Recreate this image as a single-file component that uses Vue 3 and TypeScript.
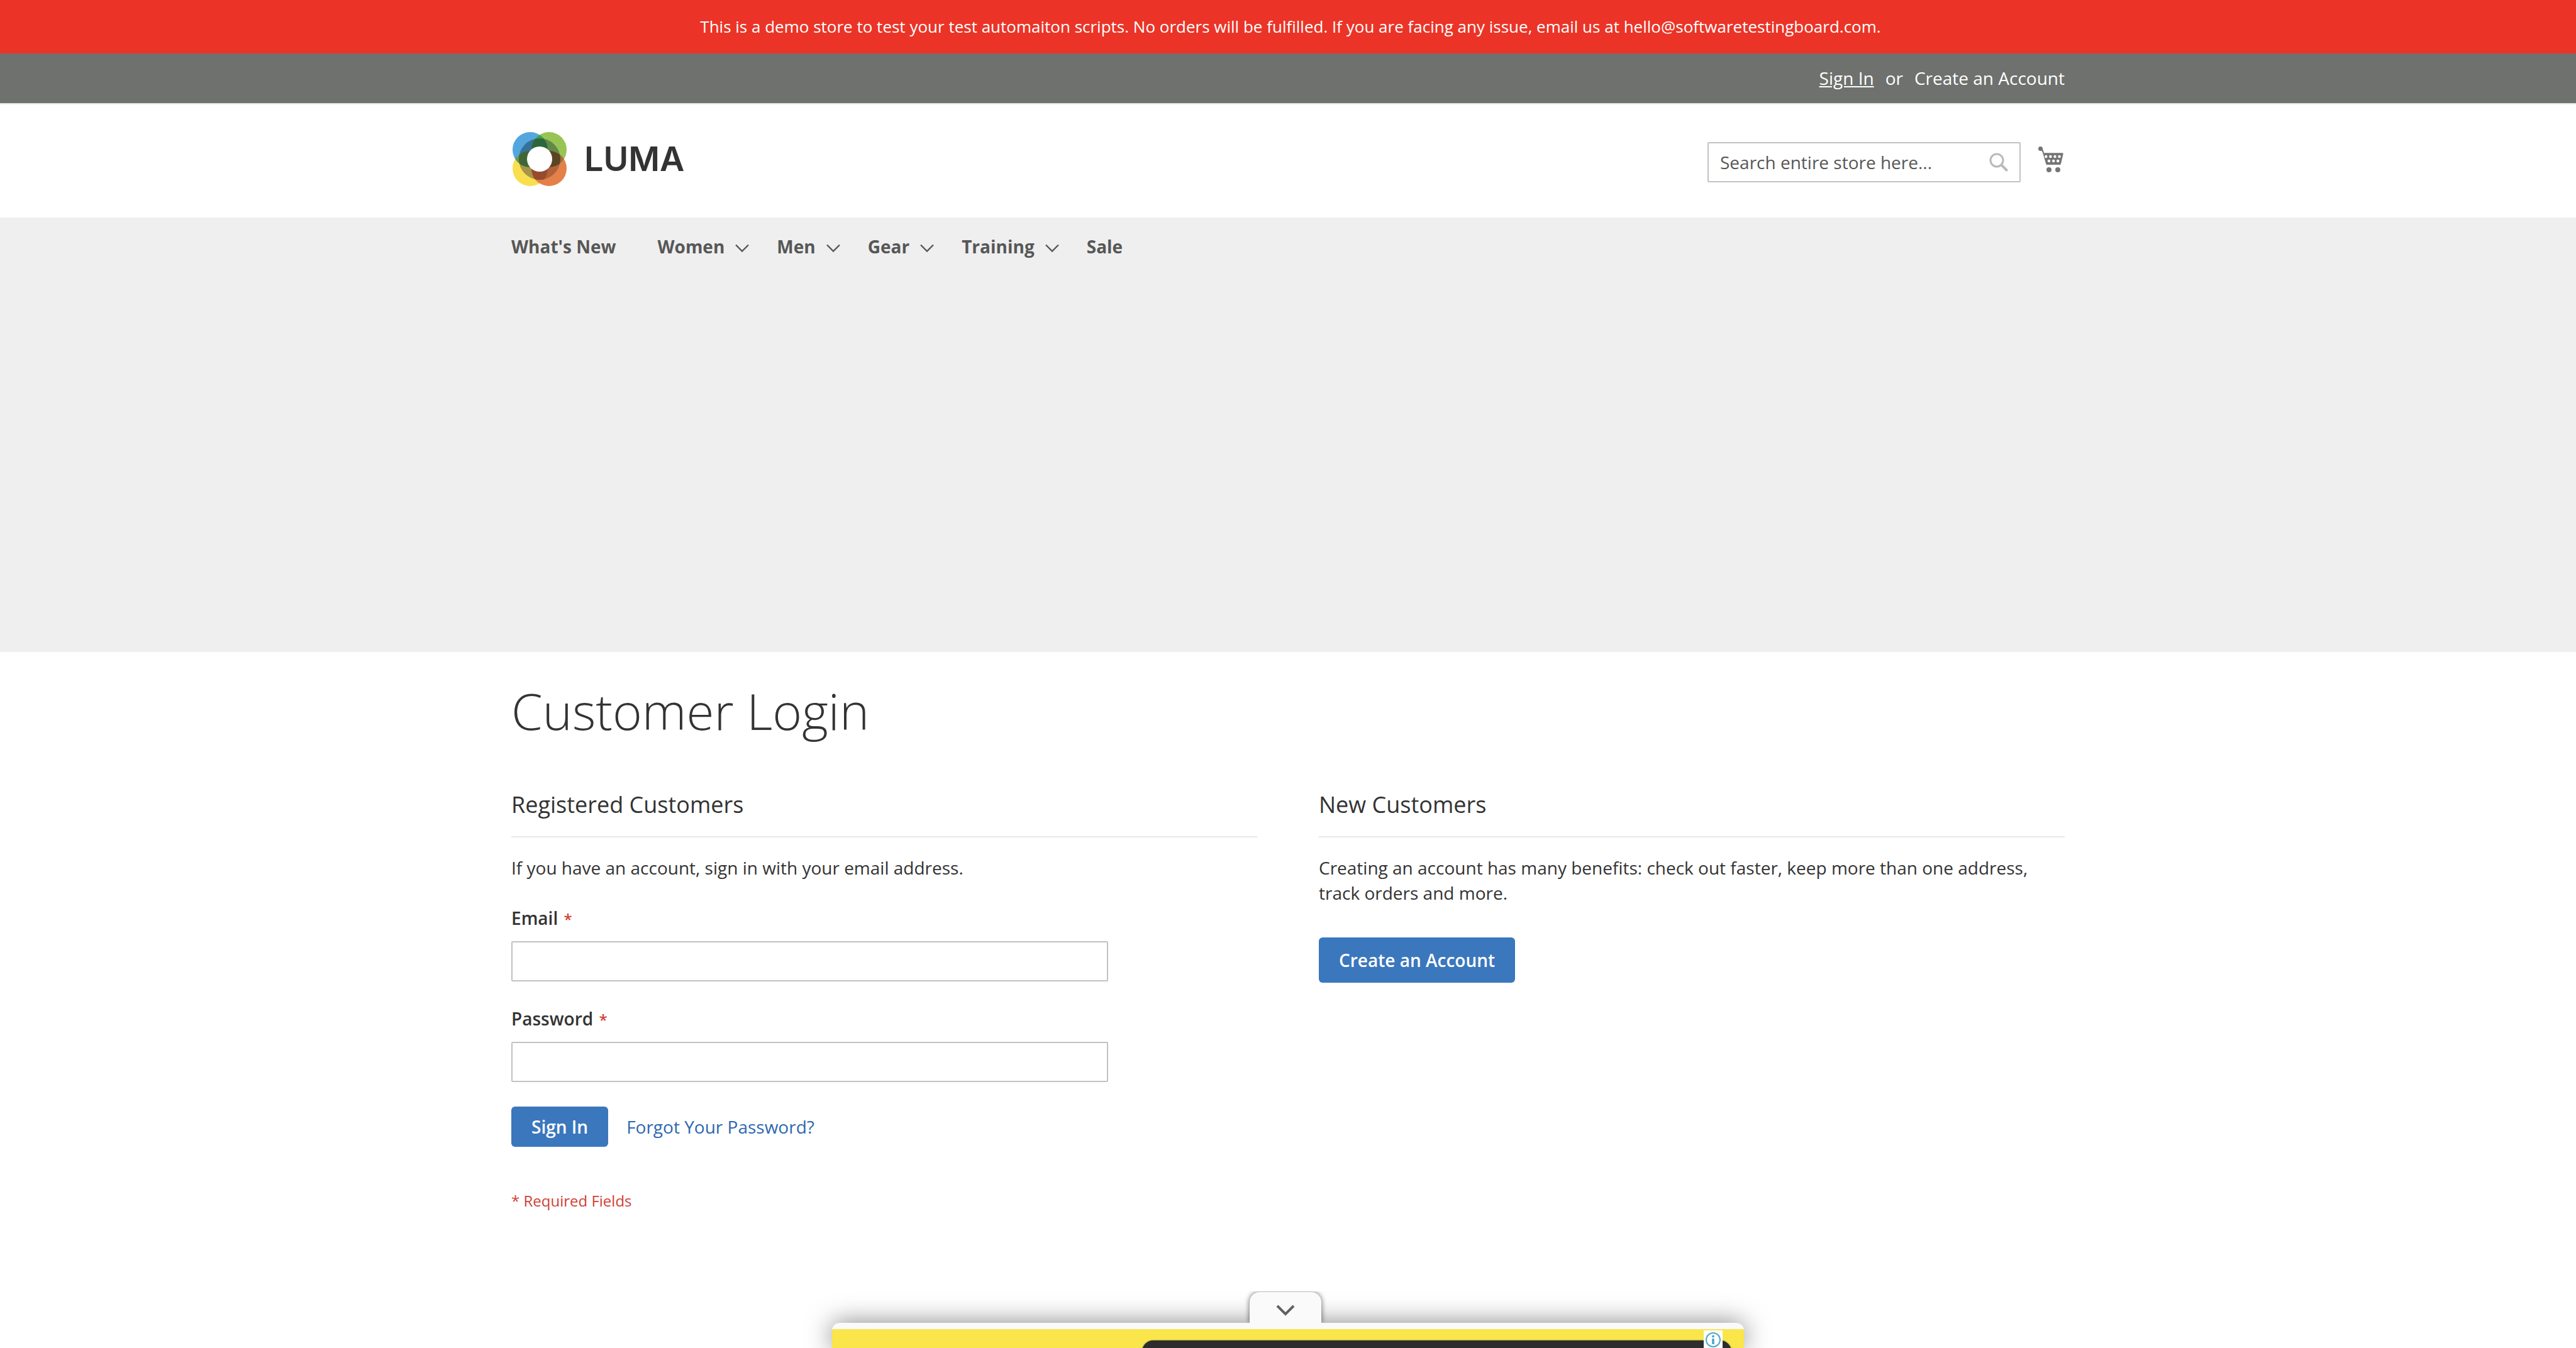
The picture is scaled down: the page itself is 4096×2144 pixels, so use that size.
<script setup lang="ts">
import { ref } from 'vue'

interface NavItem {
  label: string
  hasMenu: boolean
}

const navItems: NavItem[] = [
  { label: "What's New", hasMenu: false },
  { label: 'Women', hasMenu: true },
  { label: 'Men', hasMenu: true },
  { label: 'Gear', hasMenu: true },
  { label: 'Training', hasMenu: true },
  { label: 'Sale', hasMenu: false },
]

const search = ref('')
const email = ref('')
const password = ref('')
</script>

<template>
  <div class="page">
    <p class="notice">
      This is a demo store to test your test automaiton scripts. No orders will be fulfilled. If you are facing any issue, email us at hello@softwaretestingboard.com.
    </p>

    <header>
      <div class="panel">
        <div class="container panel-links">
          <a class="active" href="#">Sign In</a>
          <span>or</span>
          <a href="#">Create an Account</a>
        </div>
      </div>

      <div class="container header-main">
        <a class="logo" href="#" aria-label="Luma">
          <svg class="logo-mark" viewBox="0 0 86 86" aria-hidden="true">
            <defs>
              <clipPath id="luma-top-left"><circle cx="28" cy="28" r="28" /></clipPath>
              <clipPath id="luma-bottom-right"><circle cx="58" cy="58" r="28" /></clipPath>
              <clipPath id="luma-ring"><circle cx="43" cy="43" r="33" /></clipPath>
            </defs>
            <circle cx="28" cy="58" r="28" fill="#f9de4f" />
            <circle cx="28" cy="28" r="28" fill="#54a7de" />
            <circle cx="58" cy="28" r="28" fill="#98c455" />
            <circle cx="58" cy="58" r="28" fill="#e48049" />
            <circle cx="58" cy="28" r="28" fill="#3f9d54" clip-path="url(#luma-top-left)" />
            <circle cx="28" cy="58" r="28" fill="#6a9a45" clip-path="url(#luma-top-left)" />
            <circle cx="58" cy="28" r="28" fill="#a07038" clip-path="url(#luma-bottom-right)" />
            <circle cx="28" cy="58" r="28" fill="#e07c42" clip-path="url(#luma-bottom-right)" />
            <g clip-path="url(#luma-ring)">
              <circle cx="28" cy="58" r="28" fill="#a59647" />
              <circle cx="28" cy="28" r="28" fill="#357299" />
              <circle cx="58" cy="28" r="28" fill="#628849" />
              <circle cx="58" cy="58" r="28" fill="#b26239" />
              <circle cx="58" cy="28" r="28" fill="#2b673b" clip-path="url(#luma-top-left)" />
              <circle cx="28" cy="58" r="28" fill="#416636" clip-path="url(#luma-top-left)" />
              <circle cx="58" cy="28" r="28" fill="#5b4422" clip-path="url(#luma-bottom-right)" />
              <circle cx="28" cy="58" r="28" fill="#964b2c" clip-path="url(#luma-bottom-right)" />
            </g>
            <circle cx="43" cy="43" r="20" fill="#fff" />
          </svg>
          <span class="logo-text">LUMA</span>
        </a>

        <form class="search" role="search" @submit.prevent>
          <input v-model="search" type="text" placeholder="Search entire store here..." aria-label="Search" />
          <button type="submit" aria-label="Search">
            <svg viewBox="0 0 30 30" aria-hidden="true">
              <circle cx="12" cy="12" r="10" fill="none" stroke="#b9b9b9" stroke-width="3" />
              <path d="M19.500 19.500 27.500 27.500" stroke="#b9b9b9" stroke-width="4" stroke-linecap="round" />
            </svg>
          </button>
        </form>

        <a class="cart" href="#" aria-label="My Cart">
          <svg viewBox="0 0 40 41" aria-hidden="true">
            <circle cx="3.500" cy="3.500" r="3.500" fill="#757575" />
            <path d="M3 1.500C6.500 1.500 8 5.500 9 10.200H38.500Q40 10.200 39.600 12L36 27.500Q35.600 29 34.500 29H13.500Q12.600 29 12.200 27.500L7.500 11.500C6.600 8 5.500 6 3 6Z" fill="#757575" />
            <g fill="#fff">
              <circle cx="12.300" cy="16" r="2.200" /><circle cx="19.400" cy="16" r="2.200" />
              <circle cx="26.500" cy="16" r="2.200" /><circle cx="33.600" cy="16" r="2.200" />
              <circle cx="17" cy="23" r="2.200" /><circle cx="24.200" cy="23" r="2.200" />
              <circle cx="31.200" cy="23" r="2.200" />
            </g>
            <circle cx="17" cy="37" r="4" fill="#757575" />
            <circle cx="31" cy="37" r="4" fill="#757575" />
          </svg>
        </a>
      </div>
    </header>

    <div class="nav-band">
      <nav class="container">
        <ul>
          <li v-for="item in navItems" :key="item.label" :class="{ parent: item.hasMenu }">
            <a href="#">
              {{ item.label }}
              <svg v-if="item.hasMenu" viewBox="0 0 22 14" aria-hidden="true">
                <path d="M1 1.500 11 11.500 21 1.500" fill="none" stroke="#575757" stroke-width="2.400" />
              </svg>
            </a>
          </li>
        </ul>
      </nav>
    </div>

    <main class="container">
      <h1>Customer Login</h1>
      <div class="columns">
        <section>
          <h2>Registered Customers</h2>
          <p>If you have an account, sign in with your email address.</p>
          <form class="login" @submit.prevent>
            <div class="field">
              <label for="email">Email <span>*</span></label>
              <input id="email" v-model="email" type="email" />
            </div>
            <div class="field">
              <label for="password">Password <span>*</span></label>
              <input id="password" v-model="password" type="password" />
            </div>
            <div class="actions">
              <button class="primary" type="submit">Sign In</button>
              <a href="#">Forgot Your Password?</a>
            </div>
            <p class="required">* Required Fields</p>
          </form>
        </section>

        <section>
          <h2>New Customers</h2>
          <p>Creating an account has many benefits: check out faster, keep more than one address, track orders and more.</p>
          <a class="primary large" href="#">Create an Account</a>
        </section>
      </div>
    </main>

    <aside class="ad" aria-label="Advertisement">
      <div class="ad-tab-clip">
        <button class="ad-tab" type="button" aria-label="Hide advertisement">
          <svg viewBox="0 0 30 20" aria-hidden="true">
            <path d="M2 3 15 16 28 3" fill="none" stroke="#616161" stroke-width="4" />
          </svg>
        </button>
      </div>
      <div class="ad-frame">
        <div class="ad-body">
          <div class="ad-card"></div>
          <a class="ad-info" href="#" aria-label="Ad information">
            <svg viewBox="0 0 30 30" aria-hidden="true">
              <circle cx="15" cy="15" r="11" fill="none" stroke="#4ba9c8" stroke-width="2" />
              <circle cx="15" cy="9.500" r="2" fill="#4ba9c8" />
              <path d="M15 13V22" stroke="#4ba9c8" stroke-width="3.600" />
            </svg>
          </a>
        </div>
      </div>
    </aside>
  </div>
</template>

<style>
body {
  margin: 0;
  background: #fff;
}
</style>

<style scoped>
.page {
  min-height: 100vh;
  color: #333;
  font: 400 28px/40px 'Open Sans', 'Noto Sans', sans-serif;
}

.page *,
.page {
  box-sizing: border-box;
}

p,
h1,
h2,
ul {
  margin: 0;
  padding: 0;
}

a {
  color: inherit;
  text-decoration: none;
}

input,
button {
  margin: 0;
  font: inherit;
}

svg {
  display: block;
}

.container {
  width: 100%;
  max-width: 2550px;
  margin: 0 auto;
  padding: 0 40px;
}

.notice {
  padding: 22px 0 23px 8px;
  background: #eb3427;
  color: #fff;
  font-size: 26px;
  text-align: center;
}

.panel {
  padding: 19px 0 20px;
  border-bottom: 2px solid #e8e8e8;
  background: #6e716e;
  color: #fff;
}

.panel-links {
  display: flex;
  justify-content: flex-end;
  gap: 18px;
}

.active {
  text-decoration: underline;
}

.header-main {
  display: flex;
  align-items: flex-start;
  height: 180px;
}

.logo {
  display: flex;
  align-items: center;
  gap: 28px;
  margin: 44px auto 0 2px;
}

.logo-mark {
  width: 86px;
  height: 86px;
}

.logo-text {
  font: 600 54px/86px Inter, sans-serif;
}

.search {
  position: relative;
  width: 498px;
  margin-top: 60px;
}

.search input {
  width: 100%;
  height: 64px;
  padding: 0 64px 0 18px;
  border: 2px solid #c2c2c2;
  border-radius: 2px;
  background: #fff;
}

.search input::placeholder {
  color: #575757;
  opacity: 1;
}

.search button {
  position: absolute;
  top: 17px;
  right: 20px;
  padding: 0;
  border: 0;
  background: none;
}

.search svg {
  width: 30px;
  height: 30px;
}

.cart {
  margin: 67px 2px 0 28px;
}

.cart svg {
  width: 40px;
  height: 41px;
}

.nav-band {
  height: 691px;
  padding-top: 26px;
  background: #efefef;
}

.nav-band ul {
  display: flex;
  gap: 66px;
  list-style: none;
}

.nav-band .parent {
  margin-right: -22px;
}

.nav-band a {
  display: flex;
  align-items: center;
  gap: 17px;
  color: #575757;
  font-weight: 700;
}

.nav-band svg {
  width: 22px;
  height: 14px;
  margin-top: 5px;
}

h1 {
  padding: 49px 0 86px;
  font-weight: 300;
  font-size: 80px;
  line-height: 88px;
}

.columns {
  display: grid;
  grid-template-columns: 1fr 1fr;
  gap: 98px;
}

h2 {
  margin-bottom: 28px;
  padding-bottom: 30px;
  border-bottom: 2px solid #e8e8e8;
  font-weight: 400;
  font-size: 36px;
}

.login {
  margin-top: 40px;
}

.field {
  margin-bottom: 39px;
}

.field label {
  display: block;
  margin-bottom: 17px;
  font-weight: 600;
}

.field span {
  margin-left: 2px;
  color: #d14036;
  font-size: 24px;
  line-height: 24px;
}

.field input {
  display: block;
  width: 80%;
  height: 64px;
  padding: 0 18px;
  border: 2px solid #c2c2c2;
  border-radius: 2px;
  background: #fff;
}

.actions {
  display: flex;
  align-items: center;
  gap: 29px;
}

.actions a {
  color: #2d68b0;
}

.primary {
  display: inline-block;
  padding: 12px 32px;
  border: 0;
  border-radius: 6px;
  background: #3b77bd;
  color: #fff;
  font-weight: 600;
}

.large {
  margin-top: 51px;
  padding: 16px 32px;
}

.required {
  margin-top: 70px;
  color: #d14036;
  font-size: 24px;
  line-height: 32px;
}

.ad {
  position: fixed;
  right: 0;
  bottom: 0;
  left: 0;
  width: 1450px;
  margin: 0 auto;
}

.ad-tab-clip {
  position: absolute;
  z-index: 1;
  bottom: 40px;
  left: 50%;
  overflow: hidden;
  margin-left: -73px;
  padding: 1px 12px 0;
}

.ad-tab {
  display: flex;
  justify-content: center;
  width: 114px;
  height: 49px;
  padding: 19px 0 0;
  border: 0;
  border-radius: 16px 16px 0 0;
  background: #fafafa;
  box-shadow: 0 0 8px rgba(0, 0, 0, 0.6);
}

.ad-tab svg {
  width: 30px;
  height: 20px;
}

.ad-frame {
  padding-top: 10px;
  border-radius: 12px 12px 0 0;
  background: #fafafa;
  box-shadow: 0 0 40px rgba(0, 0, 0, 0.5);
}

.ad-body {
  position: relative;
  overflow: hidden;
  height: 30px;
  padding: 18px 20px 0 493px;
  background: #fae54b;
}

.ad-card {
  height: 40px;
  border-radius: 18px 18px 0 0;
  background: #2d2d2d;
  box-shadow: 0 0 2px #2d2d2d;
}

.ad-info {
  position: absolute;
  top: 2px;
  right: 34px;
  background: #fff;
}

.ad-info svg {
  width: 30px;
  height: 30px;
}
</style>
